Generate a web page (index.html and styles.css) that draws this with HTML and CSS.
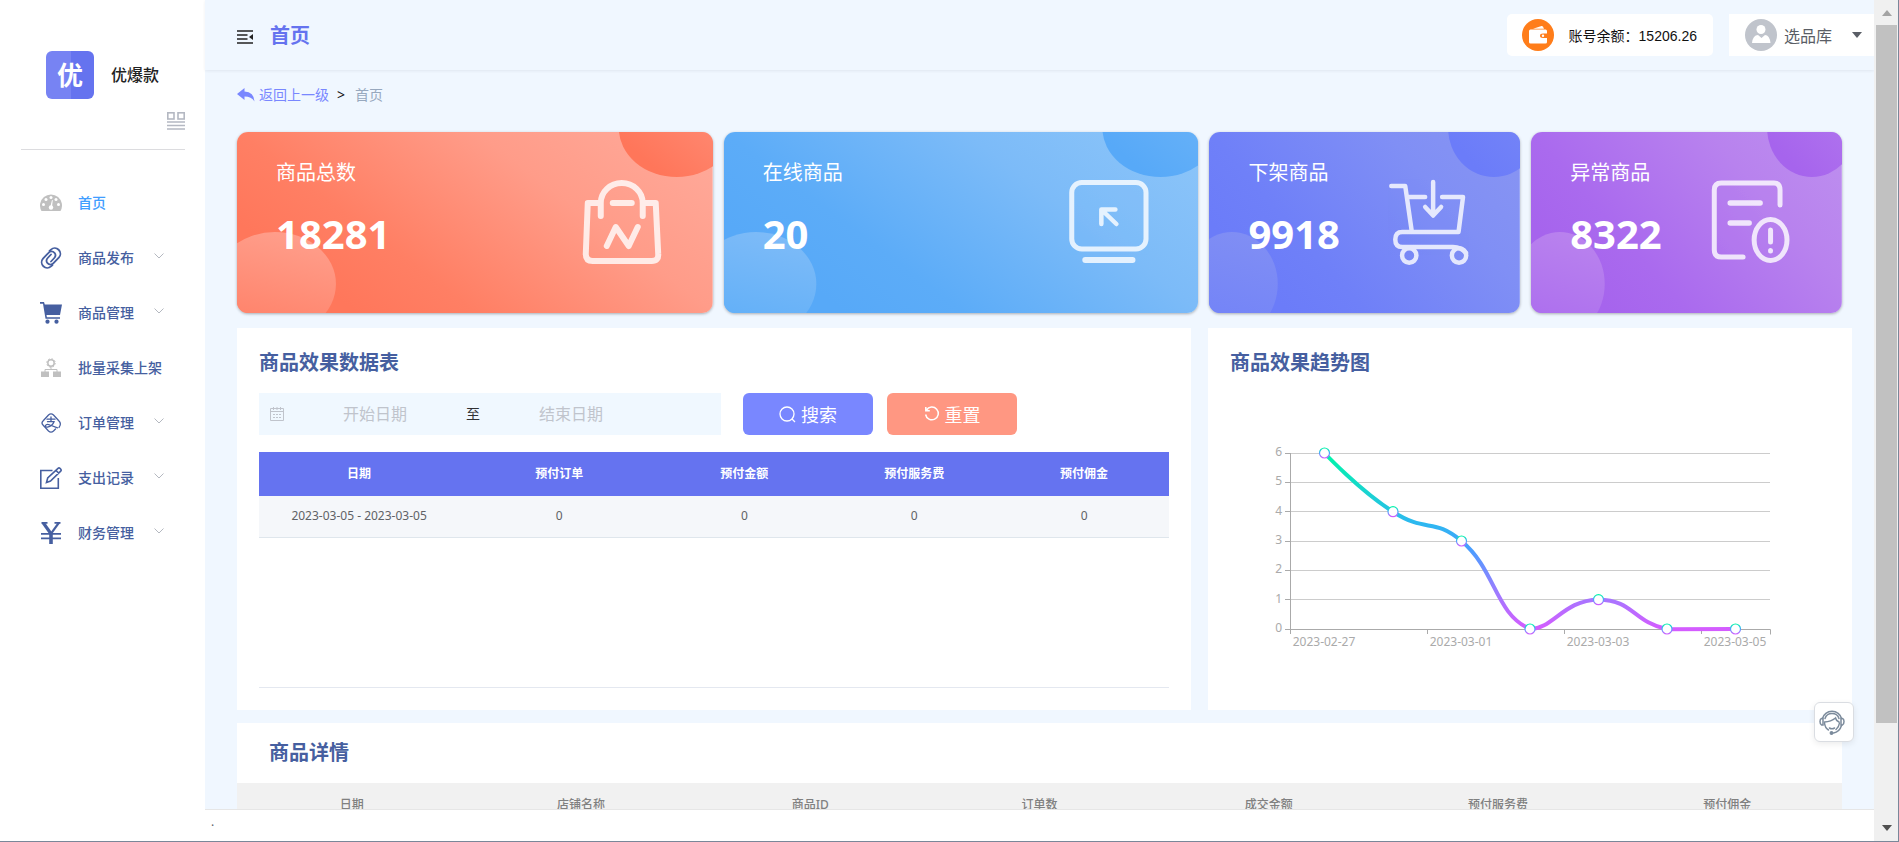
FILE: index.html
```html
<!DOCTYPE html>
<html lang="zh-CN">
<head>
<meta charset="utf-8">
<title>优爆款 - 首页</title>
<link rel="stylesheet" href="styles.css">
</head>
<body>
<div class="app">
  <aside class="sidebar">
    <div class="brand">
      <div class="brand-logo">优</div>
      <span class="brand-name">优爆款</span>
    </div>
    <div class="sidebar-tools">
      <button class="icon-button" type="button" aria-label="布局">
        <svg width="18" height="18" viewBox="0 0 18 18" fill="none" stroke="#b4b8c2" stroke-width="1.6"><rect x=".8" y=".8" width="6.2" height="6.2"/><rect x="11" y=".8" width="6.2" height="6.2"/><path d="M0 10h18M0 13.5h18M0 17h18"/></svg>
      </button>
    </div>
    <nav class="menu">
      <a class="menu-item is-active" href="#">
        <svg class="menu-icon" viewBox="0 0 22 22"><path d="M1.5 20A11 11 0 1 1 20.500 20Z" transform="translate(0 -1)" fill="#c0c0c0"/><g fill="#fff"><circle cx="11" cy="5.500" r="1.500"/><circle cx="6" cy="7.500" r="1.500"/><circle cx="16" cy="7.500" r="1.500"/><circle cx="3.500" cy="12.500" r="1.500"/><circle cx="18.500" cy="12.500" r="1.500"/><circle cx="11" cy="15.500" r="2.200"/><path d="M10.300 15l1.700-7 .8.200-.9 7z"/></g></svg>
        <span class="menu-label">首页</span>
      </a>
      <a class="menu-item" href="#">
        <svg class="menu-icon" viewBox="0 0 22 22" fill="none" stroke="#465fa0" stroke-width="1.800" stroke-linecap="round"><path d="M9.500 4l1.500-1.400a5.600 5.600 0 0 1 8 7.800l-5.500 5.800a4 4 0 0 1-6 0 4 4 0 0 1 .2-5.200L11 7.500"/><path d="M12.500 18L11 19.400a5.600 5.600 0 0 1-8-7.800l5.500-5.800a4 4 0 0 1 6 0 4 4 0 0 1-.2 5.200L11 14.500"/></svg>
        <span class="menu-label">商品发布</span>
        <svg class="menu-arrow" viewBox="0 0 10 6"><path d="M.5.500l4.500 4.500 4.500-4.500"/></svg>
      </a>
      <a class="menu-item" href="#">
        <svg class="menu-icon" viewBox="0 0 22 22"><path d="M0 0h4l.8 2.500H22L20 13H6.500l.4 2.200H20v1.500H5.500L3 1.800H0z" fill="#465fa0"/><circle cx="7.500" cy="19.700" r="2.100" fill="#465fa0"/><circle cx="16.500" cy="19.700" r="2.100" fill="#465fa0"/></svg>
        <span class="menu-label">商品管理</span>
        <svg class="menu-arrow" viewBox="0 0 10 6"><path d="M.5.500l4.500 4.500 4.500-4.500"/></svg>
      </a>
      <a class="menu-item" href="#">
        <svg class="menu-icon" viewBox="0 0 22 22"><circle cx="11" cy="6" r="3.200" fill="none" stroke="#c0c0c0" stroke-width="1.500"/><circle cx="11" cy="6" r="4.300" fill="none" stroke="#c0c0c0" stroke-width="1" stroke-dasharray="1.500 1.880"/><path d="M11 9.500v3M5 15v-2.500h12V15" fill="none" stroke="#c0c0c0"/><path d="M1 14.500h8V20H1zM13 14.500h8V20h-8z" fill="#c0c0c0"/></svg>
        <span class="menu-label">批量采集上架</span>
      </a>
      <a class="menu-item" href="#">
        <svg class="menu-icon" viewBox="0 0 22 22" fill="none" stroke="#465fa0" stroke-width="1.300" stroke-linecap="round"><path d="M19 15.500L20 13.500Q21 11 19 9L13.500 3Q11 .800 8.500 3L3 9Q1 11 3 13L8.500 19Q11 21.200 13.500 19L15.500 17"/><path d="M7 7.200h8M11 5v4.500M7.500 9.700h6.500Q12.500 14 7.500 15.200 5 15.200 5.500 13.500 6.500 11.500 10 13L17.500 15.800"/></svg>
        <span class="menu-label">订单管理</span>
        <svg class="menu-arrow" viewBox="0 0 10 6"><path d="M.5.500l4.500 4.500 4.500-4.500"/></svg>
      </a>
      <a class="menu-item" href="#">
        <svg class="menu-icon" viewBox="0 0 22 22" fill="none" stroke="#465fa0" stroke-width="1.600"><path d="M12.500 3.500H.8v17.700h17.500V11"/><path d="M6.500 15.500l1.200-4.500L18 1.300q1-.8 2 0l.8.900q.8 1-.1 2L10.500 14zM16 3.500l3 2.800"/></svg>
        <span class="menu-label">支出记录</span>
        <svg class="menu-arrow" viewBox="0 0 10 6"><path d="M.5.500l4.500 4.500 4.500-4.500"/></svg>
      </a>
      <a class="menu-item" href="#">
        <svg class="menu-icon" viewBox="0 0 22 22" fill="none" stroke="#465fa0"><path d="M1.500.9h6M14.500.9h6M1 11.800h20M1 16.300h20" stroke-width="1.800"/><path d="M11 22V11.500" stroke-width="3.600"/><path d="M3 .5l8 11.200" stroke-width="3.200"/><path d="M19 .5l-8 11.200" stroke-width="2.200"/></svg>
        <span class="menu-label">财务管理</span>
        <svg class="menu-arrow" viewBox="0 0 10 6"><path d="M.5.500l4.500 4.500 4.500-4.500"/></svg>
      </a>
    </nav>
  </aside>

  <main class="main">
    <header class="topbar">
      <button class="icon-button toggle" type="button" aria-label="收起菜单">
        <svg width="16" height="14" viewBox="0 0 16 14"><path d="M0 1h16M0 5h10.500M0 9h10.500M0 13h16" stroke="#222" stroke-width="1.600"/><path d="M16 4v6l-4-3z" fill="#222"/></svg>
      </button>
      <h1 class="topbar-title">首页</h1>
      <div class="balance">
        <svg width="32" height="32" viewBox="0 0 32 32"><circle cx="16" cy="16" r="16" fill="#ff7d1a"/><path d="M8.500 10.500h9l6 0Q25 10.500 25 12v2.500h-4q-3 0-3 2.200t3 2.200h4V23q0 1.500-1.500 1.500h-15Q7 24.500 7 23V12q0-1.500 1.500-1.500z" fill="#fff"/><path d="M11 9.700L19.500 7q1-.2 1.500.7l1 2z" fill="#fff"/><circle cx="21" cy="16.700" r="1.200" fill="#fff"/></svg>
        <span>账号余额：15206.26</span>
      </div>
      <button class="account" type="button">
        <svg width="32" height="32" viewBox="0 0 32 32"><circle cx="16" cy="16" r="16" fill="#c0c4cc"/><circle cx="16" cy="10.500" r="4.500" fill="#fff"/><path d="M7 24q1-8 6-8l3.500 3 3.500-3q4.500 0 5.500 8z" fill="#fff"/></svg>
        <span class="account-name">选品库</span>
        <svg width="10" height="6" viewBox="0 0 10 6"><path d="M0 0h10L5 6z" fill="#5a5e66"/></svg>
      </button>
    </header>

    <div class="content">
      <div class="breadcrumb">
        <a class="back" href="#">
          <svg width="18" height="14" viewBox="0 0 18 14"><path d="M0 6L7.500 0v3.500Q17 4 17.500 13.500 14.500 8.500 7.500 8.500V12z" fill="#7987ff"/></svg>
          返回上一级</a>
        <span class="crumb-sep">&gt;</span>
        <span class="crumb-current">首页</span>
      </div>

      <section class="stats">
        <article class="stat">
          <svg class="stat-art" viewBox="0 0 476 181" preserveAspectRatio="none">
            <defs>
              <linearGradient id="bg1" gradientUnits="userSpaceOnUse" x1="0" y1="90" x2="216" y2="-197"><stop offset="0" stop-color="#ff775b"/><stop offset=".2" stop-color="#ff7f64"/><stop offset=".6" stop-color="#ff9c89"/><stop offset="1" stop-color="#ffab9c"/></linearGradient>
              <linearGradient id="lo1" x1=".6" y1="0" x2=".3" y2="1"><stop offset="0" stop-color="#ff9e8b"/><stop offset="1" stop-color="#ff7f66"/></linearGradient>
              <linearGradient id="hi1" x1="0" y1="1" x2="1" y2="0"><stop offset=".2" stop-color="#ff765a"/><stop offset="1" stop-color="#ff9480"/></linearGradient>
            </defs>
            <rect width="476" height="181" fill="url(#bg1)"/>
            <ellipse cx="38" cy="152" rx="61" ry="52" fill="url(#lo1)"/>
            <ellipse cx="440" cy="-4" rx="58" ry="49" fill="url(#hi1)"/>
            <g class="stat-icon" stroke-width="6"><path d="M364 84V71a21 20 0 0 1 42 0v13M362 71H351L349 122q0 7 7 7h59q7 0 6.500-7L419 71h-11M376 71h19M370 114l9-19 13 19 9-19"/></g>
          </svg>
          <span class="stat-label">商品总数</span>
          <strong class="stat-value">18281</strong>
        </article>
        <article class="stat">
          <svg class="stat-art" viewBox="0 0 473 181" preserveAspectRatio="none">
            <defs>
              <linearGradient id="bg2" gradientUnits="userSpaceOnUse" x1="0" y1="90" x2="216" y2="-197"><stop offset="0" stop-color="#57a9f8"/><stop offset=".2" stop-color="#5cacf8"/><stop offset=".6" stop-color="#7cbbf8"/><stop offset="1" stop-color="#8ec6f9"/></linearGradient>
              <linearGradient id="lo2" x1=".6" y1="0" x2=".3" y2="1"><stop offset="0" stop-color="#7dbbf8"/><stop offset="1" stop-color="#5eaef8"/></linearGradient>
              <linearGradient id="hi2" x1="0" y1="1" x2="1" y2="0"><stop offset=".2" stop-color="#57a9f8"/><stop offset="1" stop-color="#70b6f8"/></linearGradient>
            </defs>
            <rect width="473" height="181" fill="url(#bg2)"/>
            <ellipse cx="32" cy="152" rx="60" ry="52" fill="url(#lo2)"/>
            <ellipse cx="435" cy="-4" rx="58" ry="49" fill="url(#hi2)"/>
            <g class="stat-icon" stroke-width="5"><rect x="346.500" y="50.500" width="74" height="66.500" rx="10"/><path d="M376 92V77.500h14M377.500 79L391 92" stroke-width="4.500"/><path d="M360 128h47" stroke-width="6"/></g>
          </svg>
          <span class="stat-label">在线商品</span>
          <strong class="stat-value">20</strong>
        </article>
        <article class="stat">
          <svg class="stat-art" viewBox="0 0 312 181" preserveAspectRatio="none">
            <defs>
              <linearGradient id="bg3" gradientUnits="userSpaceOnUse" x1="0" y1="90" x2="223" y2="-105"><stop offset="0" stop-color="#6b7cf9"/><stop offset=".2" stop-color="#6f80f8"/><stop offset=".65" stop-color="#808ff5"/><stop offset="1" stop-color="#8995f2"/></linearGradient>
              <linearGradient id="lo3" x1=".6" y1="0" x2=".3" y2="1"><stop offset="0" stop-color="#808ef4"/><stop offset="1" stop-color="#7182f8"/></linearGradient>
              <linearGradient id="hi3" x1="0" y1="1" x2="1" y2="0"><stop offset=".2" stop-color="#6b7cf9"/><stop offset="1" stop-color="#7a89f6"/></linearGradient>
            </defs>
            <rect width="312" height="181" fill="url(#bg3)"/>
            <ellipse cx="23" cy="152" rx="46" ry="52" fill="url(#lo3)"/>
            <ellipse cx="286" cy="-4" rx="46" ry="49" fill="url(#hi3)"/>
            <g class="stat-icon" stroke-width="4.500"><path d="M183 54h14l6.500 45M200 65h17M234 65h21l-4.500 35H194q-7 0-7 7.500t7 7.500h51q8 0 13 6"/><circle cx="201" cy="123.500" r="7.200"/><circle cx="251" cy="123.500" r="7.200"/><path d="M225 50v31M217 75l8 8.500 8-8.500"/></g>
          </svg>
          <span class="stat-label">下架商品</span>
          <strong class="stat-value">9918</strong>
        </article>
        <article class="stat">
          <svg class="stat-art" viewBox="0 0 312 181" preserveAspectRatio="none">
            <defs>
              <linearGradient id="bg4" gradientUnits="userSpaceOnUse" x1="0" y1="90" x2="223" y2="-105"><stop offset="0" stop-color="#a664ed"/><stop offset=".2" stop-color="#aa6aee"/><stop offset=".65" stop-color="#b882ee"/><stop offset="1" stop-color="#be90ef"/></linearGradient>
              <linearGradient id="lo4" x1=".6" y1="0" x2=".3" y2="1"><stop offset="0" stop-color="#b982ee"/><stop offset="1" stop-color="#ab6cee"/></linearGradient>
              <linearGradient id="hi4" x1="0" y1="1" x2="1" y2="0"><stop offset=".2" stop-color="#a664ed"/><stop offset="1" stop-color="#b57bee"/></linearGradient>
            </defs>
            <rect width="312" height="181" fill="url(#bg4)"/>
            <ellipse cx="29" cy="152" rx="45" ry="52" fill="url(#lo4)"/>
            <ellipse cx="282" cy="-4" rx="45" ry="49" fill="url(#hi4)"/>
            <g class="stat-icon" stroke-width="5"><path d="M250 73V58q0-7-6-7h-53q-7 0-7 7v60q0 7 7 7h22"/><path d="M200 71h30M200 91h19" stroke-width="5.500"/><ellipse cx="240.500" cy="108" rx="16.500" ry="20.500"/><path d="M240.500 98v12M240.500 118.500v.5"/></g>
          </svg>
          <span class="stat-label">异常商品</span>
          <strong class="stat-value">8322</strong>
        </article>
      </section>

      <section class="panels">
        <article class="panel panel-data">
          <h2 class="panel-title">商品效果数据表</h2>
          <form class="filters">
            <div class="date-range">
              <svg width="14" height="14" viewBox="0 0 14 14" fill="none" stroke="#c0c4cc"><path d="M.5 1.500h13v12H.5zM.5 4.500h13M3.500 0v3M7 0v3M10.500 0v3"/><path d="M3 7.500h8M3 10.500h8" stroke-dasharray="2 1"/></svg>
              <input class="date-input" type="text" placeholder="开始日期" aria-label="开始日期">
              <span class="date-sep">至</span>
              <input class="date-input" type="text" placeholder="结束日期" aria-label="结束日期">
            </div>
            <button class="btn btn-search" type="button">
              <svg width="17" height="17" viewBox="0 0 17 17" fill="none" stroke="#fff" stroke-width="1.300"><circle cx="8" cy="8" r="7"/><path d="M13 13l3 3"/></svg>
              搜索</button>
            <button class="btn btn-reset" type="button">
              <svg width="16" height="16" viewBox="0 0 16 16" fill="none" stroke="#fff" stroke-width="1.500"><path d="M2.500 4A6.400 6.400 0 1 1 1.600 8.500M1.800 1v3.800h4"/></svg>
              重置</button>
          </form>
          <div class="table-wrap">
            <table class="data-table">
              <colgroup><col class="col-wide"><col class="col-wide"><col><col><col></colgroup>
              <thead><tr><th>日期</th><th>预付订单</th><th>预付金额</th><th>预付服务费</th><th>预付佣金</th></tr></thead>
              <tbody><tr><td>2023-03-05 - 2023-03-05</td><td>0</td><td>0</td><td>0</td><td>0</td></tr></tbody>
            </table>
          </div>
        </article>

        <article class="panel panel-trend">
          <h2 class="panel-title">商品效果趋势图</h2>
          <svg class="chart" viewBox="0 0 644 300">
            <defs>
              <linearGradient id="trend" gradientUnits="userSpaceOnUse" x1="0" y1="60" x2="0" y2="236"><stop offset="0" stop-color="#00f7a8"/><stop offset=".4" stop-color="#2db8f0"/><stop offset=".55" stop-color="#4a9dff"/><stop offset=".8" stop-color="#a07aff"/><stop offset="1" stop-color="#d45cff"/></linearGradient>
              <linearGradient id="dot" x1="0" y1="0" x2="0" y2="1"><stop offset="0" stop-color="#00f7a8"/><stop offset=".5" stop-color="#4aa5ff"/><stop offset="1" stop-color="#d45cff"/></linearGradient>
            </defs>
            <path class="grid-line" d="M82 60.500h480M82 89.500h480M82 118.500h480M82 148.500h480M82 177.500h480M82 206.500h480"/>
            <path class="axis-line" d="M82.500 60v181M77 236.500h485.500v5M77 60.500h5M77 89.500h5M77 118.500h5M77 148.500h5M77 177.500h5M77 206.500h5M219.500 236v5M356.500 236v5M493.500 236v5"/>
            <g class="axis-text" text-anchor="end"><text x="74" y="63">6</text><text x="74" y="92">5</text><text x="74" y="122">4</text><text x="74" y="151">3</text><text x="74" y="180">2</text><text x="74" y="210">1</text><text x="74" y="239">0</text></g>
            <g class="axis-text" text-anchor="middle"><text x="116" y="253">2023-02-27</text><text x="253" y="253">2023-03-01</text><text x="390" y="253">2023-03-03</text><text x="527" y="253">2023-03-05</text></g>
            <path d="M116.500 60C116.500 60 151 97 185 118.700C219 140.700 225 124 253.500 148C288 177 287 221 322 236C345 236 356 206.700 390.500 206.700C425 206.700 425 229 459 236.200L527.500 236" fill="none" stroke="url(#trend)" stroke-width="4"/>
            <g fill="#fff" stroke="url(#dot)" stroke-width="1.200"><circle cx="116.500" cy="60" r="5"/><circle cx="185" cy="118.700" r="5"/><circle cx="253.500" cy="148" r="5"/><circle cx="322" cy="236" r="5"/><circle cx="390.500" cy="206.700" r="5"/><circle cx="459" cy="236" r="5"/><circle cx="527.500" cy="236" r="5"/></g>
          </svg>
        </article>
      </section>

      <section class="details">
        <h2 class="panel-title details-title">商品详情</h2>
        <table class="details-table">
          <thead><tr><th>日期</th><th>店铺名称</th><th>商品ID</th><th>订单数</th><th>成交金额</th><th>预付服务费</th><th>预付佣金</th></tr></thead>
        </table>
      </section>
    </div>

    <footer class="footer">.</footer>
  </main>

  <div class="scrollbar" aria-hidden="true">
    <svg class="scroll-arrow" viewBox="0 0 10 6"><path d="M0 6h10L5 0z" fill="#a3a3a3"/></svg>
    <div class="scroll-thumb"></div>
    <svg class="scroll-arrow" viewBox="0 0 10 6"><path d="M0 0h10L5 6z" fill="#505050"/></svg>
  </div>

  <button class="service" type="button" aria-label="客服">
    <svg width="26" height="26" viewBox="0 0 26 26" fill="none" stroke="#7c8b9c" stroke-width="1.500" stroke-linecap="round"><path d="M3.500 9.500a9.700 9 0 0 1 19 0M6 9.500a7.300 7 0 0 1 14 0"/><path d="M4 9.500H2.500Q1 10 1 12.500T2.500 16H4zM22 9.500h1.500q1.500.5 1.500 3T23.500 16H22z"/><path d="M5.500 13q6.500-.2 11-4 .5 2.500 3.500 4M5.500 14q.5 5 4 7M20.500 14q-.5 4-3.500 6.500M22.500 16.500q-2 6.500-8 7.500"/><path d="M10.500 19q2.500 1.500 5 0"/><circle cx="12.500" cy="24" r="1.200" fill="#7c8b9c"/></svg>
  </button>
</div>
</body>
</html>
```
FILE: styles.css
```css
* {
  box-sizing: border-box;
}

body {
  margin: 0;
  font-family: "Noto Sans", "Noto Sans CJK SC", sans-serif;
  font-size: 14px;
  color: #303133;
}

h1,
h2 {
  margin: 0;
}

a {
  text-decoration: none;
}

svg {
  display: block;
  flex: none;
}

button,
input {
  font: inherit;
}

.app {
  display: flex;
  height: 100vh;
  overflow: hidden;
  border-right: 1px solid #7a8799;
  border-bottom: 1px solid #7a8799;
  background: #fff;
}

.icon-button {
  display: block;
  padding: 0;
  border: 0;
  background: none;
}

/* Sidebar */

.sidebar {
  flex: 0 0 205px;
}

.brand {
  display: flex;
  align-items: center;
  gap: 17px;
  padding: 51px 0 0 46px;
}

.brand-logo {
  width: 48px;
  height: 48px;
  border-radius: 6px;
  background: linear-gradient(90deg, #7783f3 52%, #6573ef 52%);
  color: #fff;
  font-size: 26px;
  font-weight: 700;
  line-height: 48px;
  text-align: center;
}

.brand-name {
  font-size: 16px;
  font-weight: 500;
  line-height: 24px;
  color: #222;
}

.sidebar-tools {
  display: flex;
  justify-content: flex-end;
  margin: 0 20px 0 21px;
  padding: 13px 0 19px;
  border-bottom: 1px solid #dcdcdf;
}

.menu {
  padding-top: 25px;
}

.menu-item {
  display: flex;
  align-items: center;
  height: 55px;
  padding-left: 40px;
  color: #465fa0;
}

.menu-icon {
  width: 22px;
  height: 22px;
}

.menu-label {
  width: 84px;
  margin-left: 16px;
  font-weight: 500;
  line-height: 20px;
  white-space: nowrap;
}

.is-active {
  color: #409eff;
}

.menu-arrow {
  width: 10px;
  height: 6px;
  margin: 0 0 4px -8px;
  fill: none;
  stroke: #b4b8c0;
}

/* Main column */

.main {
  display: flex;
  flex: 1;
  flex-direction: column;
  min-width: 0;
  background: #f0f7ff;
}

.topbar {
  display: flex;
  flex: none;
  align-items: center;
  height: 70px;
  padding-left: 32px;
  box-shadow: 0 1px 3px rgba(0, 21, 41, 0.07);
}

.toggle {
  padding-top: 3px;
}

.topbar-title {
  margin-left: 17px;
  padding-top: 2px;
  font-size: 20px;
  line-height: 28px;
  color: #6573ef;
}

.balance {
  display: flex;
  align-items: center;
  gap: 15px;
  height: 42px;
  margin-left: auto;
  padding: 0 16px 0 15px;
  border-radius: 5px;
  background: #fff;
  color: #111;
  font-family: "Liberation Sans", "Noto Sans CJK SC", sans-serif;
}

.account {
  display: flex;
  align-items: center;
  height: 42px;
  margin-left: 16px;
  padding: 0 12px 0 16px;
  border: 0;
  background: #fff;
  color: #5a5e66;
  font-size: 16px;
}

.account-name {
  margin: 0 20px 0 7px;
}

.content {
  flex: 1;
  min-height: 0;
  overflow: hidden;
  padding: 15px 22px 0 32px;
}

.breadcrumb {
  display: flex;
  align-items: center;
  height: 20px;
  line-height: 20px;
}

.back {
  display: flex;
  align-items: center;
  gap: 4px;
  color: #7987ff;
}

.crumb-sep {
  margin: 0 10px 0 8px;
  color: #111;
}

.crumb-current {
  color: #97a8be;
}

.stats {
  display: grid;
  grid-template-columns: 476fr 475fr 311fr 311fr;
  gap: 11px;
  margin: 27px 10px 0 0;
}

.stat {
  display: flex;
  position: relative;
  flex-direction: column;
  height: 181px;
  padding: 26px 0 0 39px;
  overflow: hidden;
  border-radius: 11px;
  box-shadow: 0 1px 3px rgba(0, 0, 0, 0.3);
  color: #fff;
}

.stat-art {
  position: absolute;
  inset: 0;
  width: 100%;
  height: 100%;
}

.stat-icon {
  fill: none;
  stroke: #fff;
  stroke-linecap: round;
  stroke-linejoin: round;
  opacity: 0.8;
}

.stat-label,
.stat-value {
  position: relative;
}

.stat-label {
  font-size: 20px;
  line-height: 30px;
}

.stat-value {
  margin-top: 18px;
  font-size: 40px;
  line-height: 56px;
}

/* Panels */

.panels {
  display: grid;
  grid-template-columns: 954fr 644fr;
  gap: 17px;
  margin-top: 15px;
}

.panel {
  background: #fff;
}

.panel-title {
  font-size: 20px;
  line-height: 30px;
  color: #465fa0;
}

.panel-data {
  padding: 20px 22px 22px;
}

.filters {
  display: flex;
  margin-top: 15px;
}

.date-range {
  display: flex;
  align-items: center;
  width: 462px;
  height: 42px;
  padding-left: 11px;
  background: #f0f8ff;
}

.date-input {
  width: 182px;
  padding: 0;
  border: 0;
  background: none;
  font-size: 16px;
  text-align: center;
}

.date-input::placeholder {
  color: #c0c4cc;
}

.date-sep {
  flex: none;
  width: 14px;
  color: #303133;
  line-height: 24px;
}

.btn {
  display: flex;
  align-items: center;
  justify-content: center;
  gap: 5px;
  width: 130px;
  height: 42px;
  padding: 0;
  border: 0;
  border-radius: 6px;
  color: #fff;
  font-size: 18px;
}

.btn-search {
  margin-left: 22px;
  background: #7987ff;
}

.btn-reset {
  margin-left: 14px;
  background: #ff9782;
}

.table-wrap {
  height: 236px;
  margin-top: 17px;
  border-bottom: 1px solid #e4e8f0;
}

.data-table,
.details-table {
  width: 100%;
  border-collapse: collapse;
  table-layout: fixed;
  font-size: 12px;
  line-height: 20px;
  text-align: center;
}

.col-wide {
  width: 22%;
}

.data-table th {
  height: 44px;
  padding: 0;
  background: #6573f0;
  color: #fff;
}

.data-table td {
  height: 41px;
  padding: 0;
  border-bottom: 1px solid #dfe6ec;
  background: #f5f7fa;
  color: #606266;
}

.panel-trend {
  padding-top: 20px;
}

.panel-trend .panel-title {
  padding-left: 22px;
}

.chart {
  width: 100%;
  margin-top: 15px;
}

.grid-line {
  fill: none;
  stroke: #ccc;
}

.axis-line {
  fill: none;
  stroke: #aaa;
}

.axis-text {
  fill: #aaa;
  font-size: 12px;
}

.details {
  margin: 13px 10px 0 0;
  background: #fff;
}

.details-title {
  padding: 15px 0 15px 32px;
}

.details-table th {
  height: 43px;
  padding: 0;
  background: #f1f1f1;
  color: #808080;
  font-weight: 500;
}

.footer {
  flex: none;
  height: 32px;
  padding-left: 6px;
  border-top: 1px solid #e6e6e6;
  background: #fff;
  color: #606266;
  font-size: 12px;
  line-height: 24px;
}

/* Scroll track and floating service button */

.scrollbar {
  display: flex;
  flex: 0 0 24px;
  flex-direction: column;
  align-items: center;
  padding: 10px 1px 10px 2px;
  background: #f0f0f0;
}

.scroll-arrow {
  width: 10px;
  height: 6px;
}

.scroll-thumb {
  width: 21px;
  height: 698px;
  margin: 9px 0 auto;
  background: #c1c1c1;
}

.service {
  display: flex;
  position: fixed;
  right: 45px;
  bottom: 100px;
  align-items: center;
  justify-content: center;
  width: 40px;
  height: 40px;
  padding: 0 4px 0 0;
  border: 1px solid #dadde2;
  border-radius: 6px;
  background: #fff;
  box-shadow: 0 2px 6px rgba(0, 0, 0, 0.08);
}
```
